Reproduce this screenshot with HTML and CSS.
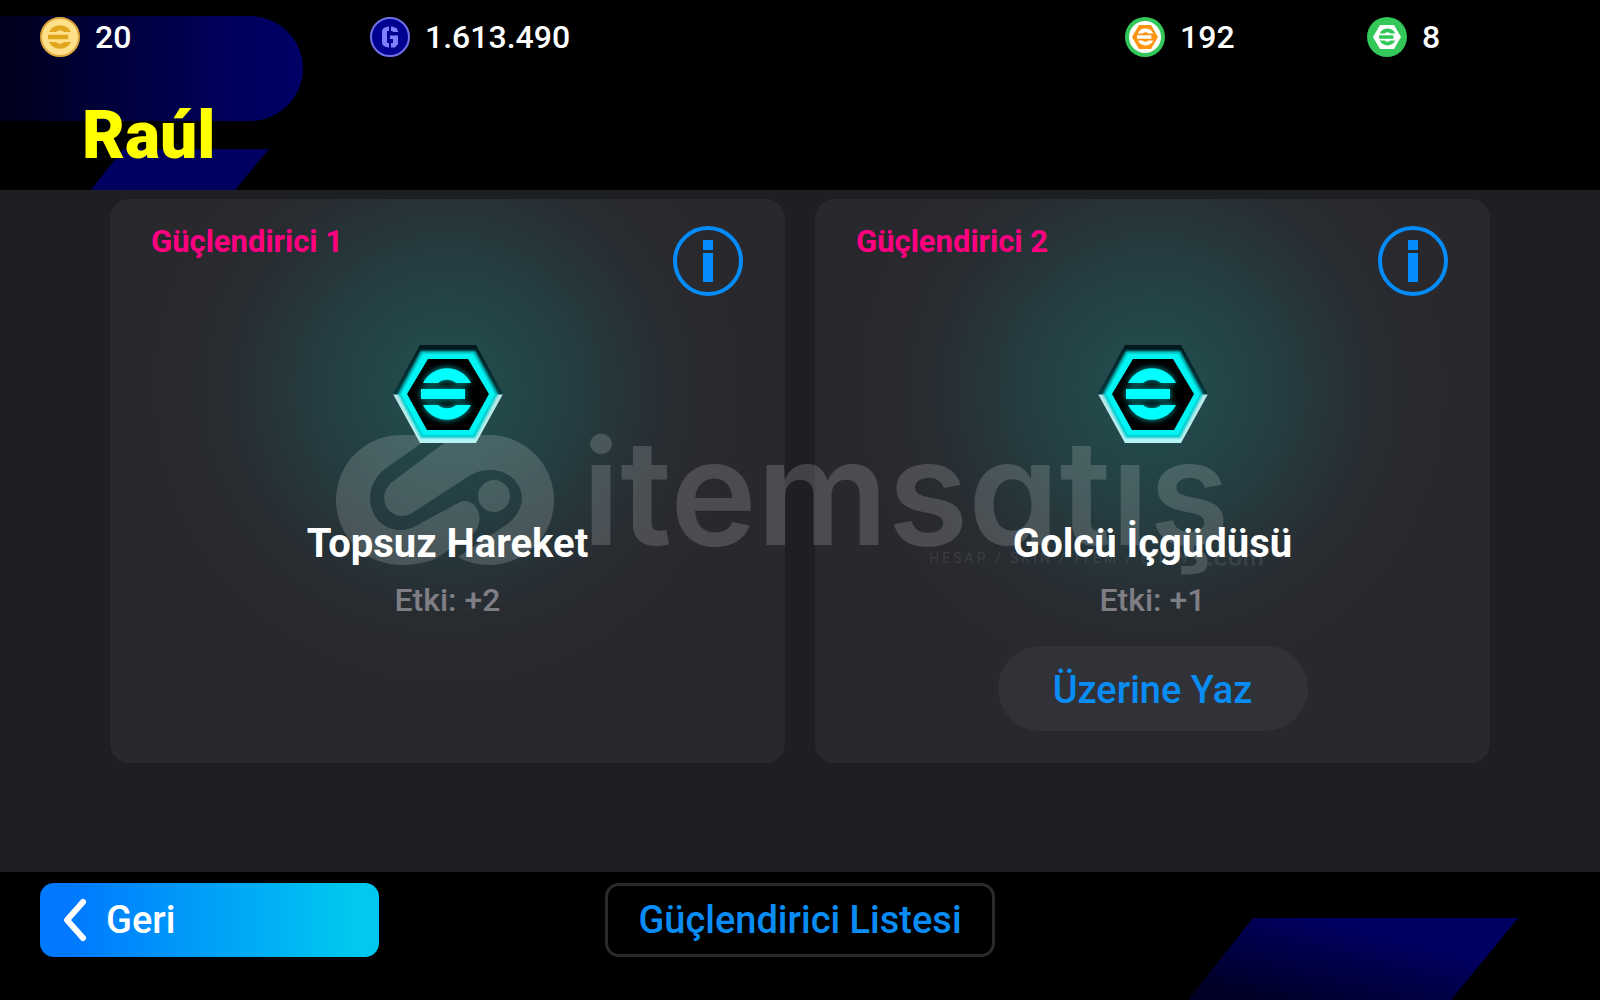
FILE: index.html
```html
<!DOCTYPE html>
<html lang="tr">
<head>
<meta charset="utf-8">
<title>Raúl – Güçlendirici</title>
<link rel="stylesheet" href="styles.css">
</head>
<body>
<svg class="defs" aria-hidden="true">
  <defs>
    <linearGradient id="hexRim" x1="0" y1="0" x2="0" y2="1">
      <stop offset="0" stop-color="#021a1e"/>
      <stop offset="0.5" stop-color="#03383c"/>
      <stop offset="0.51" stop-color="#b9e6e8"/>
      <stop offset="1" stop-color="#b9f4f4"/>
    </linearGradient>
    <filter id="neon" x="-30%" y="-30%" width="160%" height="160%">
      <feGaussianBlur stdDeviation="3"/>
    </filter>
    <filter id="soft" x="-10%" y="-10%" width="120%" height="120%">
      <feGaussianBlur stdDeviation="1.3"/>
    </filter>
    <symbol id="emark" viewBox="0 0 52 54">
      <path d="M2 16A27 27 0 0 1 50 16H35A14 14 0 0 0 17 16ZM0 22H44V32H0ZM2 38H17A14 14 0 0 0 35 38H50A27 27 0 0 1 2 38Z"/>
    </symbol>
    <symbol id="booster" viewBox="0 0 112 100">
      <path d="M28 1H84L111 50L84 99H28L1 50Z" fill="url(#hexRim)"/>
      <path d="M29 7H83L106 50L83 94H29L6 50Z" fill="#00d0d0" filter="url(#soft)"/>
      <path d="M31 10H81L103 50L81 91H31L9 50Z" fill="#00f4f4"/>
      <path d="M36 15H76L97 50L77 86H35L15 50Z" fill="#000"/>
      <use href="#emark" x="29" y="23" width="52" height="54" fill="#00b8b8" filter="url(#neon)"/>
      <use href="#emark" x="29" y="23" width="52" height="54" fill="#0ff"/>
    </symbol>
    <symbol id="info" viewBox="0 0 72 72">
      <circle cx="36" cy="36" r="33" fill="none" stroke="#058cfb" stroke-width="4"/>
      <path d="M31 15H41V25H31ZM31 28H41V57H31Z" fill="#058cfb"/>
    </symbol>
  </defs>
</svg>
<div class="screen">
  <header class="top">
    <svg class="top-art" width="310" height="190" viewBox="0 0 310 190" aria-hidden="true">
      <defs><linearGradient id="bar"><stop offset="0" stop-color="#00001c"/><stop offset="0.75" stop-color="#00005c"/><stop offset="1" stop-color="#000066"/></linearGradient></defs>
      <path d="M0 16H250A53 53 0 0 1 250 121H0Z" fill="url(#bar)"/>
      <path d="M0 16H250A53 53 0 0 1 303 68A53 53 0 0 1 250 121H0Z" fill="url(#bar)"/>
      <path d="M123 149H269L235 190H91Z" fill="#000060"/>
    </svg>
    <ul class="wallet">
      <li class="coin">
        <svg width="40" height="40" viewBox="0 0 40 40" aria-hidden="true">
          <circle cx="20" cy="20" r="19" fill="#ffe08a" stroke="#dca73b" stroke-width="2"/>
          <use href="#emark" x="8" y="7" width="24" height="26" fill="#dfa61e"/>
        </svg>
        <span>20</span>
      </li>
      <li class="coin">
        <svg width="40" height="40" viewBox="0 0 40 40" aria-hidden="true">
          <circle cx="20" cy="20" r="19" fill="#000090" stroke="#7070e8" stroke-width="2"/>
          <path d="M19 9.500V14H17V26H19V30.500C14 30 12 28 12 25V15C12 12 14 10 19 9.500ZM21 9.500C26 10 28 12 28 15H23C23 14 22 14 21 14ZM20 18.500H28V27L25 30.500H21V26H23V22H20Z" fill="#8080ff"/>
        </svg>
        <span>1.613.490</span>
      </li>
      <li class="coin">
        <svg width="40" height="40" viewBox="0 0 40 40" aria-hidden="true">
          <circle cx="20" cy="20" r="20" fill="#34c759"/>
          <circle cx="20" cy="20" r="16" fill="#fff"/>
          <path d="M14 8H26L33 20L26 32H14L7 20Z" fill="#ff9410"/>
          <use href="#emark" x="12" y="11" width="17" height="18" fill="#fff"/>
        </svg>
        <span>192</span>
      </li>
      <li class="coin">
        <svg width="40" height="40" viewBox="0 0 40 40" aria-hidden="true">
          <circle cx="20" cy="20" r="20" fill="#34c759"/>
          <path d="M13 8H27L34 20L27 32H13L6 20Z" fill="#fff"/>
          <use href="#emark" x="12" y="11" width="17" height="18" fill="#34c759"/>
        </svg>
        <span>8</span>
      </li>
    </ul>
    <h1 class="player">Raúl</h1>
  </header>

  <main class="boosters">
    <section class="card">
      <header class="card-head">
        <h2 class="slot">Güçlendirici 1</h2>
        <button class="info" type="button" aria-label="Bilgi"><svg width="72" height="72"><use href="#info"/></svg></button>
      </header>
      <svg class="hex" width="112" height="100" aria-hidden="true"><use href="#booster"/></svg>
      <h3 class="name">Topsuz Hareket</h3>
      <p class="effect">Etki: +2</p>
    </section>
    <section class="card">
      <header class="card-head">
        <h2 class="slot">Güçlendirici 2</h2>
        <button class="info" type="button" aria-label="Bilgi"><svg width="72" height="72"><use href="#info"/></svg></button>
      </header>
      <svg class="hex" width="112" height="100" aria-hidden="true"><use href="#booster"/></svg>
      <h3 class="name">Golcü İçgüdüsü</h3>
      <p class="effect">Etki: +1</p>
      <button class="overwrite" type="button">Üzerine Yaz</button>
    </section>
  </main>

  <footer class="bottom">
    <svg class="bottom-art" width="330" height="82" viewBox="0 0 330 82" aria-hidden="true">
      <defs><linearGradient id="para" x1="0" y1="1" x2="1" y2="0"><stop offset="0.1" stop-color="#000026"/><stop offset="0.7" stop-color="#000062"/></linearGradient></defs>
      <path d="M65 0H330L263 82H0Z" fill="url(#para)"/>
    </svg>
    <button class="back" type="button">
      <svg width="24" height="44" viewBox="0 0 24 44" aria-hidden="true"><path d="M20 4L4 22L20 40" fill="none" stroke="#fff" stroke-width="6" stroke-linecap="round" stroke-linejoin="round"/></svg>
      Geri
    </button>
    <button class="list" type="button">Güçlendirici Listesi</button>
  </footer>

  <div class="watermark">
    <svg width="218" height="130" viewBox="0 0 218 130" aria-hidden="true">
      <path fill-rule="evenodd" d="M65 0H97L53 31C20 52 34 95 64 95C73 95 79 92 85 88L124 67C136 62 146 76 143 88C141 98 132 102 124 108L97 125Q82 130 65 130A65 65 0 0 1 65 0ZM119 0H153A65 65 0 0 1 153 130Q136 130 122 122L167 92C200 72 186 35 154 35C146 35 140 37 133 41L76 78C58 89 38 67 54 49Q57 46 119 0Z" fill="#fff"/>
      <circle cx="158" cy="61" r="16" fill="#fff"/>
    </svg>
    <div class="brand">
      <span class="word">itemsatış</span>
      <span class="tag"><span>HESAP / SKIN / ITEM / E-PIN</span><span class="com">.com</span></span>
    </div>
  </div>
</div>
</body>
</html>
```
FILE: styles.css
```css
* { box-sizing: border-box; }

body {
  margin: 0;
  background: #000;
  color: #fff;
  font-family: Roboto, "Liberation Sans", sans-serif;
}

h1, h2, h3, p, ul { margin: 0; padding: 0; }

button {
  border: 0;
  padding: 0;
  background: none;
  color: inherit;
  font: inherit;
  cursor: pointer;
}

svg { display: block; }

.defs { position: absolute; width: 0; height: 0; }

.screen {
  position: relative;
  display: flex;
  flex-direction: column;
  min-height: 100vh;
}

/* header */
.top {
  position: relative;
  min-height: 190px;
  padding: 17px 40px 0;
}

.top-art { position: absolute; left: 0; top: 0; }

.wallet {
  position: relative;
  display: grid;
  grid-template-columns: 330px 1fr 242px 193px;
  list-style: none;
}

.coin {
  display: flex;
  align-items: center;
  gap: 15px;
  font-size: 32px;
  line-height: 40px;
  font-weight: 500;
}

.player {
  position: relative;
  padding: 39px 0 0 42px;
  color: #ff0;
  font-size: 66px;
  line-height: 80px;
  font-weight: 900;
}

/* booster cards */
.boosters {
  flex: 1;
  display: grid;
  grid-template-columns: 1fr 1fr;
  gap: 30px;
  padding: 9px 110px 109px;
  background: #1e1f25;
}

.card {
  display: flex;
  flex-direction: column;
  align-items: center;
  padding: 26px 41px 32px;
  border-radius: 20px;
  background: radial-gradient(circle 290px at 50% 190px, #224c4e 0, #23484a 20%, #253b3f 48%, #282c31 78%, #29282d 100%);
}

.card > * { position: relative; z-index: 2; }

.card-head {
  display: flex;
  justify-content: space-between;
  align-self: stretch;
}

.slot {
  color: #ff0080;
  font-size: 31px;
  line-height: 34px;
  font-weight: 700;
}

.hex { margin-top: 47px; }

.name {
  margin-top: 76px;
  font-size: 40px;
  line-height: 48px;
  font-weight: 700;
}

.effect {
  margin-top: 12px;
  color: #7e7e84;
  font-size: 32px;
  line-height: 40px;
  font-weight: 500;
}

.overwrite {
  width: 310px;
  height: 85px;
  margin-top: 26px;
  padding-top: 3px;
  border-radius: 43px;
  background: #313237;
  color: #0a8cf5;
  font-size: 38px;
  font-weight: 500;
}

/* footer */
.bottom {
  position: relative;
  display: grid;
  grid-template-columns: 1fr 390px 1fr;
  align-items: start;
  min-height: 128px;
  padding: 11px 40px;
  overflow: hidden;
}

.bottom-art { position: absolute; right: 82px; bottom: 0; }

.back, .list {
  height: 74px;
  border-radius: 14px;
  font-size: 38px;
  font-weight: 500;
}

.back {
  display: flex;
  align-items: center;
  gap: 19px;
  width: 339px;
  padding-left: 23px;
  background: linear-gradient(90deg, #0078ff 8%, #00c8f0 92%);
}

.list {
  border: 3px solid #2a2a2c;
  color: #0a8cf5;
}

/* watermark between card backgrounds and card content */
.watermark {
  position: absolute;
  inset: 0;
  z-index: 1;
  display: flex;
  align-items: center;
  justify-content: center;
  gap: 28px;
  opacity: 0.16;
  pointer-events: none;
}

.brand {
  display: flex;
  flex-direction: column;
  width: 682px;
}

.word {
  font-family: Inter, sans-serif;
  font-size: 146px;
  line-height: 116px;
  font-weight: 600;
  font-feature-settings: "cv11" 1;
}

.tag {
  display: flex;
  justify-content: flex-end;
  align-items: center;
  gap: 16px;
  opacity: 0.5;
  font-size: 14px;
  line-height: 16px;
  letter-spacing: 3px;
}

.com {
  font-family: Inter, sans-serif;
  font-size: 24px;
  font-weight: 600;
  letter-spacing: 0;
}
```
